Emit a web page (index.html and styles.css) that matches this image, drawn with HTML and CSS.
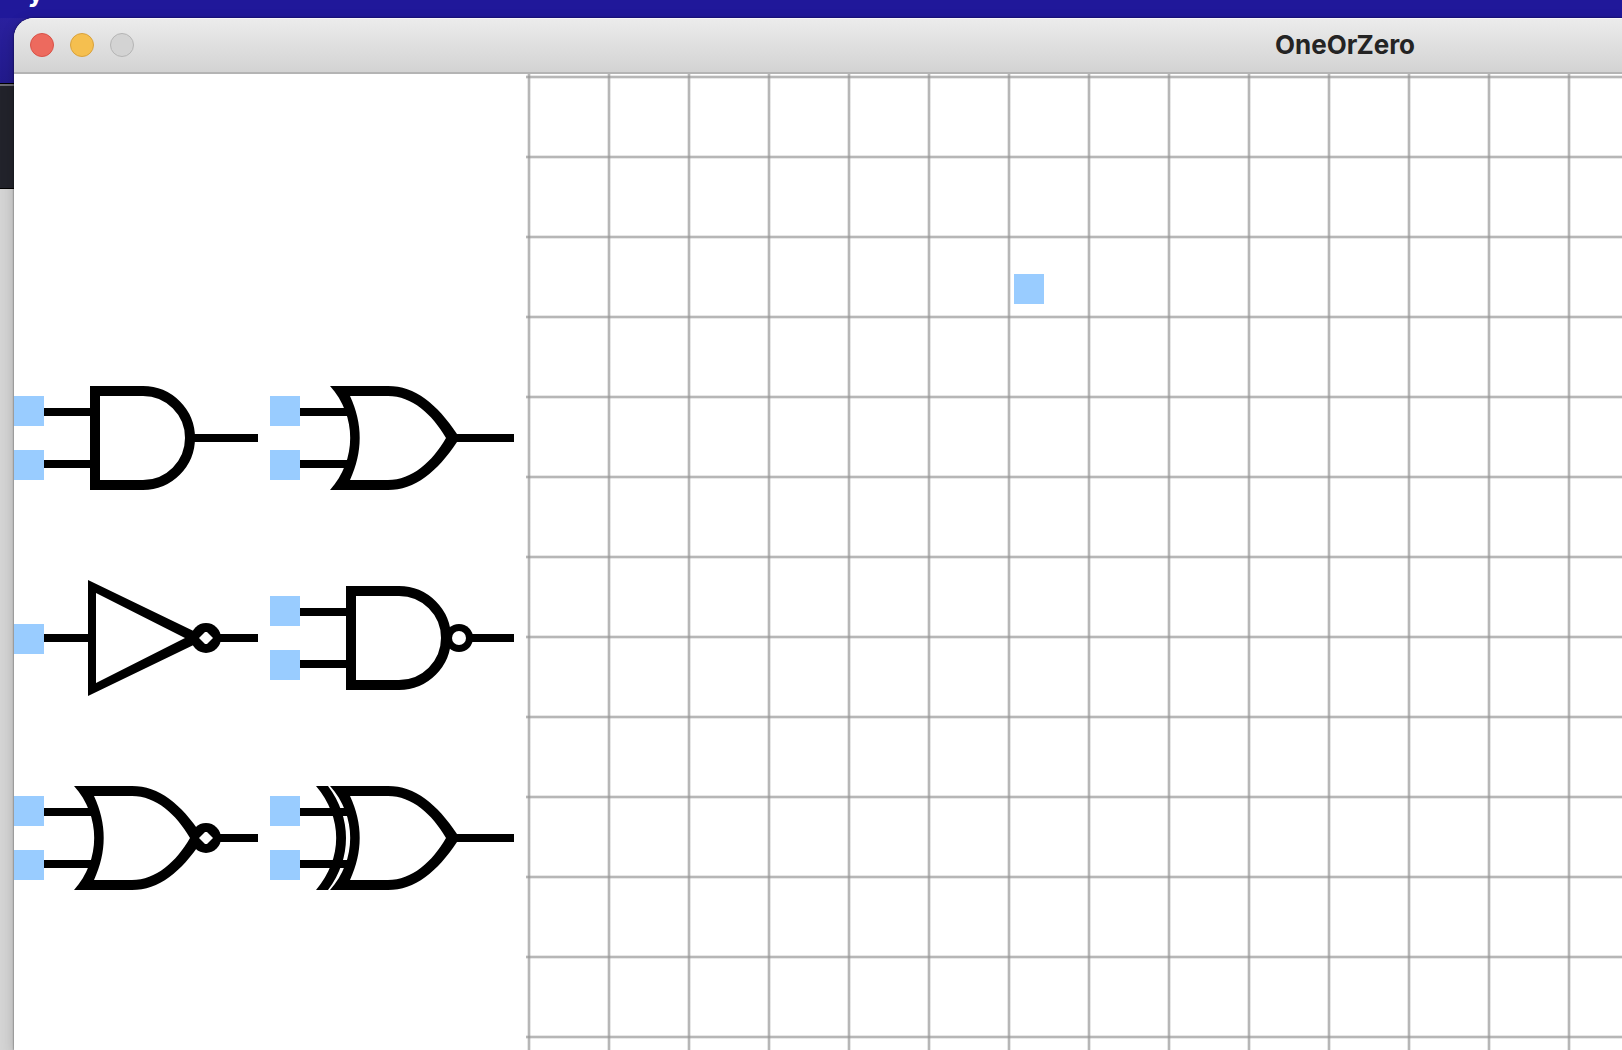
FILE: index.html
```html
<!DOCTYPE html>
<html lang="en">
<head>
<meta charset="utf-8">
<title>OneOrZero</title>
<link rel="stylesheet" href="styles.css">
</head>
<body>
<div class="menubar"><span class="menubar-item">y</span></div>
<main class="window">
  <header class="titlebar">
    <div class="controls">
      <button class="control close" aria-label="Close"></button>
      <button class="control minimize" aria-label="Minimize"></button>
      <button class="control zoom" aria-label="Zoom" disabled></button>
    </div>
    <h1 class="title">OneOrZero</h1>
  </header>
  <div class="workspace">
    <aside class="palette">
      <button class="gate" aria-label="AND gate">
        <svg viewBox="0 0 256 200">
          <path class="pin" d="M0 58h30v30H0zM0 112h30v30H0z"/>
          <path d="M30 70h48v8H30zM30 122h48v8H30zM178 96h66v8h-66z"/>
          <path class="outline" d="M81 53H129A47 47 0 0 1 129 147H81Z"/>
        </svg>
      </button>
      <button class="gate" aria-label="OR gate">
        <svg viewBox="0 0 256 200">
          <path class="pin" d="M0 58h30v30H0zM0 112h30v30H0z"/>
          <path d="M30 70h50v8H30zM30 122h50v8H30zM182 96h62v8h-62z"/>
          <path fill-rule="evenodd" d="M60 48H118C145 48 167 66 187 96V104C167 134 145 152 118 152H60C87 122 87 78 60 48ZM80 58C93 86 93 114 80 142H118C142 142 162 124 176 100C162 76 142 58 118 58Z"/>
        </svg>
      </button>
      <button class="gate" aria-label="NOT gate">
        <svg viewBox="0 0 256 200">
          <path class="pin" d="M0 86h30v30H0z"/>
          <path d="M30 96h46v8H30zM200 96h44v8h-44z"/>
          <path fill-rule="evenodd" d="M74 42L192 99V101L74 158ZM82 55V145L171 100Z"/>
          <circle cx="192" cy="100" r="15"/>
          <path class="hole" d="M185 100L191 94H193L199 100L193 106H191Z"/>
        </svg>
      </button>
      <button class="gate" aria-label="NAND gate">
        <svg viewBox="0 0 256 200">
          <path class="pin" d="M0 58h30v30H0zM0 112h30v30H0z"/>
          <path d="M30 70h48v8H30zM30 122h48v8H30zM198 96h46v8h-46z"/>
          <path class="outline" d="M81 53H129A47 47 0 0 1 129 147H81Z"/>
          <circle cx="189" cy="100" r="14"/>
          <circle class="hole" cx="189" cy="100" r="7"/>
        </svg>
      </button>
      <button class="gate" aria-label="NOR gate">
        <svg viewBox="0 0 256 200">
          <path class="pin" d="M0 58h30v30H0zM0 112h30v30H0z"/>
          <path d="M30 70h50v8H30zM30 122h50v8H30zM200 96h44v8h-44z"/>
          <path fill-rule="evenodd" d="M60 48H118C145 48 167 66 187 96V104C167 134 145 152 118 152H60C87 122 87 78 60 48ZM80 58C93 86 93 114 80 142H118C142 142 162 124 176 100C162 76 142 58 118 58Z"/>
          <circle cx="192" cy="100" r="15"/>
          <path class="hole" d="M185 100L191 94H193L199 100L193 106H191Z"/>
        </svg>
      </button>
      <button class="gate" aria-label="XOR gate">
        <svg viewBox="0 0 256 200">
          <path class="pin" d="M0 58h30v30H0zM0 112h30v30H0z"/>
          <path d="M30 70h50v8H30zM30 122h50v8H30zM182 96h62v8h-62z"/>
          <path d="M46 48H58C82 80 82 120 58 152H46C73 120 73 80 46 48Z"/>
          <path fill-rule="evenodd" d="M60 48H118C145 48 167 66 187 96V104C167 134 145 152 118 152H60C87 122 87 78 60 48ZM80 58C93 86 93 114 80 142H118C142 142 162 124 176 100C162 76 142 58 118 58Z"/>
        </svg>
      </button>
    </aside>
    <section class="canvas" aria-label="Circuit canvas">
      <div class="node"></div>
    </section>
  </div>
</main>
</body>
</html>
```
FILE: styles.css
```css
* {
  box-sizing: border-box;
}

body {
  margin: 0;
  height: 100vh;
  overflow: hidden;
  display: flex;
  flex-direction: column;
  font-family: Inter, Roboto, "Liberation Sans", sans-serif;
  background: linear-gradient(
    #20189a 16px, #2a209e 17px, #221a8c 83px,
    #000 83px, #000 84px, #6c6c72 84px, #6c6c72 86px,
    #22232b 86px, #22232b 188px, #000 188px, #000 189px,
    #d4d4d4 189px);
}

.menubar {
  flex: none;
  height: 18px;
  padding-left: 28px;
  overflow: hidden;
  background: #20189a;
}

.menubar-item {
  display: block;
  margin-top: -20px;
  font-size: 26px;
  font-weight: 700;
  line-height: 26px;
  color: #fff;
}

.window {
  flex: 1;
  display: flex;
  flex-direction: column;
  margin-left: 14px;
  overflow: hidden;
  border-radius: 20px 0 0 0;
  background: #fff;
  box-shadow: 0 0 2px rgba(0, 0, 0, 0.7), 0 4px 14px rgba(0, 0, 0, 0.2);
}

/* The title bar runs past the right edge of the screen. */
.titlebar {
  flex: none;
  height: 56px;
  margin-right: -1054px;
  display: grid;
  grid-template-columns: 1fr auto 1fr;
  align-items: center;
  padding: 0 16px;
  background: linear-gradient(#ececec, #d3d3d3);
  border-bottom: 2px solid #b4b4b4;
  box-shadow: inset 0 1px #f6f6f6;
}

.controls {
  display: flex;
  gap: 16px;
}

.control {
  width: 24px;
  height: 24px;
  padding: 0;
  border: 1px solid;
  border-radius: 50%;
}

.close {
  background: #ed6a5e;
  border-color: #d85248;
}

.minimize {
  background: #f5bf4f;
  border-color: #d8a13c;
}

.zoom {
  background: #d3d3d3;
  border-color: #b4b4b4;
}

.title {
  margin: 0;
  font-size: 26px;
  line-height: 32px;
  font-weight: 700;
  color: #242424;
}

.workspace {
  flex: 1;
  display: flex;
}

.palette {
  flex: none;
  display: grid;
  grid-template-columns: 256px 256px;
  grid-auto-rows: 200px;
  padding-top: 264px;
}

.gate {
  padding: 0;
  border: 0;
  background: none;
}

.gate svg {
  display: block;
  width: 256px;
  height: 200px;
}

.pin {
  fill: #99ccff;
}

.outline {
  fill: none;
  stroke: #000;
  stroke-width: 10px;
}

.hole {
  fill: #fff;
}

.canvas {
  --core: #969696b0;
  --edge: #96969638;
  position: relative;
  flex: 1;
  background:
    linear-gradient(transparent 1px, var(--edge) 1px, var(--edge) 2px, var(--core) 2px, var(--core) 4px, var(--edge) 4px, var(--edge) 5px, transparent 5px) 0 0 / 80px 80px,
    linear-gradient(90deg, transparent 1px, var(--edge) 1px, var(--edge) 2px, var(--core) 2px, var(--core) 4px, var(--edge) 4px, var(--edge) 5px, transparent 5px) 0 0 / 80px 80px;
}

.node {
  position: absolute;
  left: 488px;
  top: 200px;
  width: 30px;
  height: 30px;
  background: #99ccff;
}
```
